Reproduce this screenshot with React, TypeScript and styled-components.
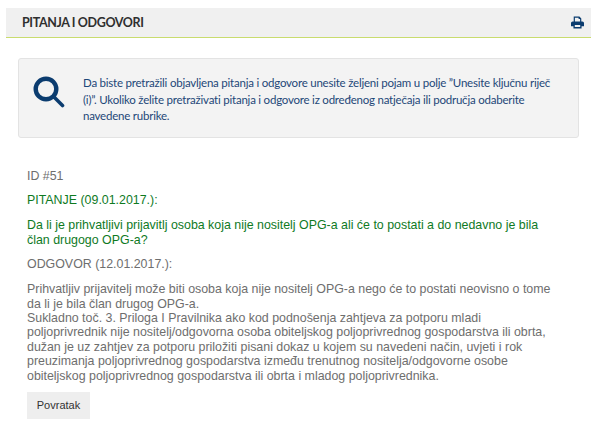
import React from "react";
import styled, { createGlobalStyle } from "styled-components";

const Global = createGlobalStyle`
  html, body { margin: 0; padding: 0; background: #fff; }
  body { font-family: "Liberation Sans", Arial, sans-serif; }
`;

const Page = styled.div`
  width: 600px;
  height: 439px;
  padding: 8px 9px 0 6px;
  box-sizing: border-box;
  overflow: hidden;
`;

const Header = styled.header`
  height: 30px;
  box-sizing: border-box;
  background: #f0f0f0;
  border-bottom: 1.5px solid #c9dc6e;
  display: flex;
  align-items: center;
  justify-content: space-between;
  padding: 0 7px 0 16px;
`;

const Title = styled.h1`
  margin: 0;
  font-family: Lato, sans-serif;
  font-size: 12.5px;
  font-weight: 700;
  letter-spacing: -0.38px;
  color: #2f2f2f;
`;

const PrintIcon = styled.svg`
  width: 13px;
  height: 13px;
  color: #0b3c6f;
  display: block;
`;

const Notice = styled.section`
  margin: 20px 12px 0;
  height: 80px;
  box-sizing: border-box;
  background: #f3f3f3;
  border: 1px solid #e3e3e3;
  border-radius: 3px;
  display: flex;
  align-items: flex-start;
  padding: 16px 24px 0 14px;
  gap: 18px;
`;

const SearchIcon = styled.svg`
  width: 32px;
  height: 32px;
  flex: none;
  margin-top: 1px;
  color: #0b3c6f;
`;

const NoticeText = styled.p`
  margin: 0;
  font-family: Lato, sans-serif;
  font-size: 11.5px;
  letter-spacing: -0.22px;
  line-height: 16.5px;
  color: #1d4778;
`;

const Content = styled.main`
  padding: 0 21px;
  margin-top: 30.5px;
  font-size: 12.4px;
  line-height: 14.4px;
  color: #666;
`;

const Para = styled.p<{ $tone?: "green" }>`
  margin: 0 0 10.4px;
  color: ${(p) => (p.$tone === "green" ? "#0f7a1f" : "#6e6e6e")};
`;

const BackButton = styled.button`
  display: block;
  width: 63px;
  height: 27px;
  margin-top: -1.5px;
  padding: 0;
  border: 0;
  background: #eeeeee;
  font-family: "Liberation Sans", Arial, sans-serif;
  font-size: 11px;
  color: #333;
`;

export default function App() {
  return (
    <Page>
      <Global />
      <Header>
        <Title>PITANJA I ODGOVORI</Title>
        <PrintIcon viewBox="0 0 24 24" aria-hidden="true">
          <path
            fill="currentColor"
            d="M5 1h10.500L19 4.500V10h-2.200V5.500H14V3H7.200v7H5V1zM3 10h18a3 3 0 0 1 3 3v6h-4.500v4h-15v-4H0v-6a3 3 0 0 1 3-3zM7 16.500v4h10v-4H7z"
          />
        </PrintIcon>
      </Header>
      <Notice>
        <SearchIcon viewBox="0 0 32 32" aria-hidden="true">
          <circle cx="13" cy="13" r="10.300" fill="none" stroke="currentColor" strokeWidth="4.400" />
          <path d="M21 21 L29.500 29.500" stroke="currentColor" strokeWidth="3.600" strokeLinecap="round" />
        </SearchIcon>
        <NoticeText>
          Da biste pretražili objavljena pitanja i odgovore unesite željeni pojam u polje ”Unesite ključnu riječ (i)”. Ukoliko želite pretraživati pitanja i odgovore iz određenog natječaja ili područja odaberite navedene rubrike.
        </NoticeText>
      </Notice>
      <Content>
        <Para>ID #51</Para>
        <Para $tone="green">PITANJE (09.01.2017.):</Para>
        <Para $tone="green">
          Da li je prihvatljivi prijavitlj osoba koja nije nositelj OPG-a ali će to postati a do nedavno je bila
          <br />
          član drugogo OPG-a?
        </Para>
        <Para>ODGOVOR (12.01.2017.):</Para>
        <Para>
          Prihvatljiv prijavitelj može biti osoba koja nije nositelj OPG-a nego će to postati neovisno o tome
          <br />
          da li je bila član drugog OPG-a.
          <br />
          Sukladno toč. 3. Priloga I Pravilnika ako kod podnošenja zahtjeva za potporu mladi
          <br />
          poljoprivrednik nije nositelj/odgovorna osoba obiteljskog poljoprivrednog gospodarstva ili obrta,
          <br />
          dužan je uz zahtjev za potporu priložiti pisani dokaz u kojem su navedeni način, uvjeti i rok
          <br />
          preuzimanja poljoprivrednog gospodarstva između trenutnog nositelja/odgovorne osobe
          <br />
          obiteljskog poljoprivrednog gospodarstva ili obrta i mladog poljoprivrednika.
        </Para>
        <BackButton>Povratak</BackButton>
      </Content>
    </Page>
  );
}
